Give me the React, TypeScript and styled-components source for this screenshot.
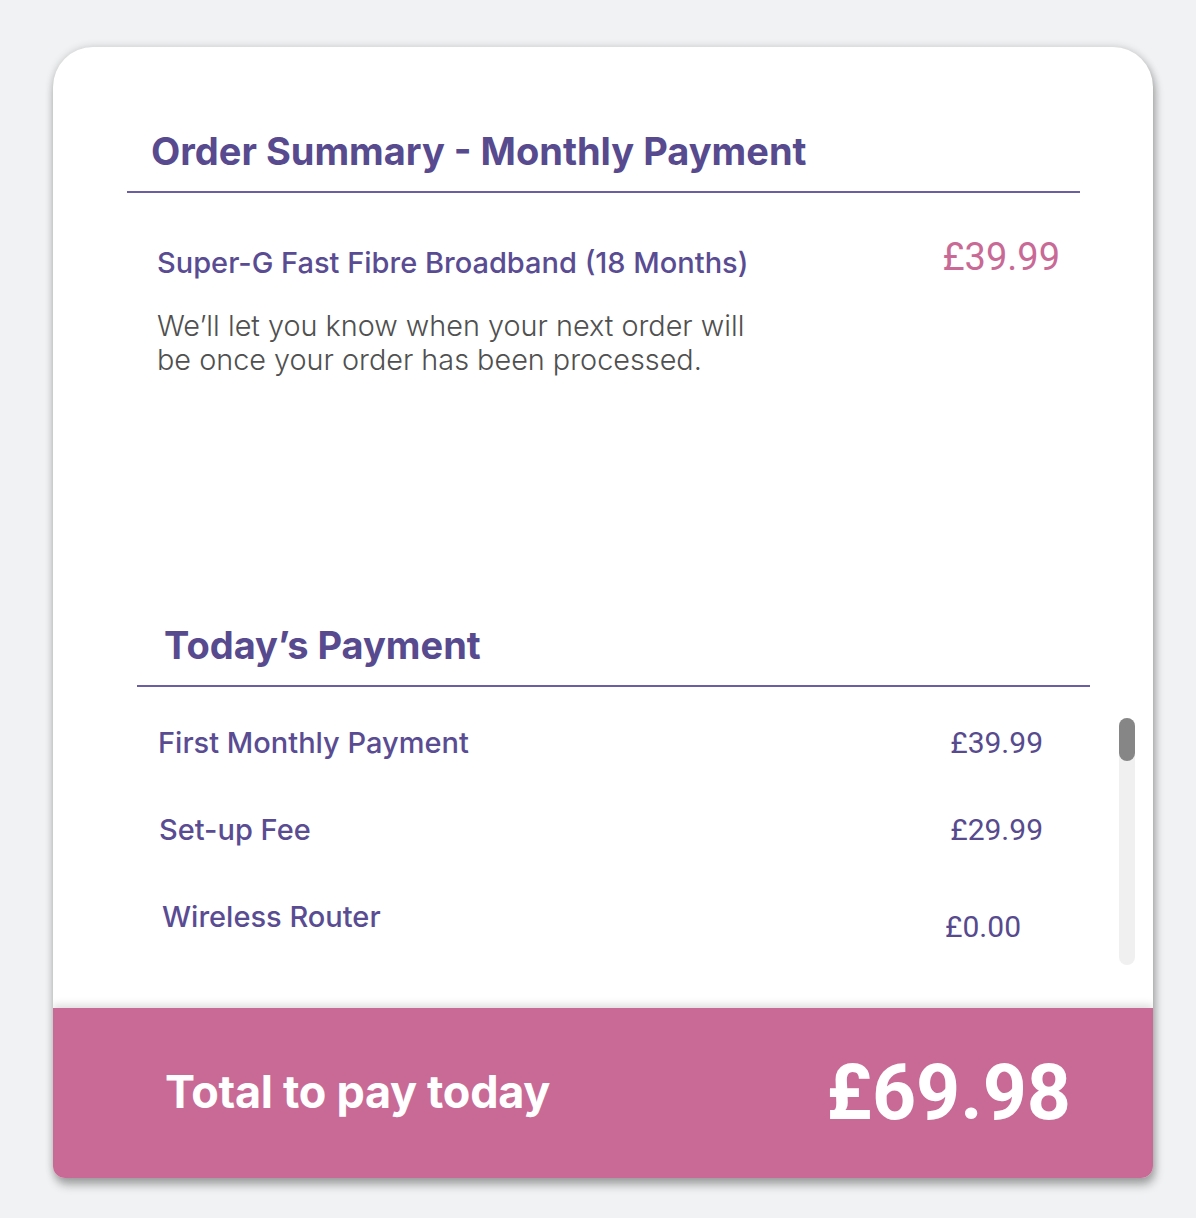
import React from "react";
import styled, { createGlobalStyle } from "styled-components";

const Global = createGlobalStyle`
  html, body { margin: 0; padding: 0; background: #f1f2f3; }
  body { font-family: Inter, "Noto Sans", sans-serif; }
`;

const Page = styled.div`
  width: 1196px;
  height: 1218px;
  box-sizing: border-box;
  padding: 47px 43px 0 53px;
`;

const Card = styled.div`
  width: 1100px;
  height: 1131px;
  background: #fff;
  border-radius: 40px 40px 12px 12px;
  box-shadow: 0 0 8px rgba(0, 0, 0, 0.16), 2px 7px 10px rgba(0, 0, 0, 0.3);
  display: flex;
  flex-direction: column;
  overflow: hidden;
`;

const Body = styled.div`
  flex: 1;
  display: flex;
  flex-direction: column;
`;

const SectionHead = styled.div<{ $top: number; $left: number; $right: number; $indent: number }>`
  margin: ${(p) => p.$top}px ${(p) => p.$right}px 0 ${(p) => p.$left}px;
  padding: 0 0 17px ${(p) => p.$indent}px;
  border-bottom: 2px solid #6b5ea3;
`;

const Heading = styled.h2`
  margin: 0;
  font-size: 38px;
  line-height: 46px;
  font-weight: 700;
  color: #574a8e;
`;

const Product = styled.div`
  display: flex;
  justify-content: space-between;
  align-items: flex-start;
  margin: 53px 93px 0 104px;
`;

const ProductInfo = styled.div`
  display: flex;
  flex-direction: column;
  gap: 29px;
`;

const ProductName = styled.div`
  font-size: 29px;
  line-height: 34px;
  font-weight: 500;
  color: #5a4c93;
`;

const Note = styled.p`
  margin: 0;
  width: 615px;
  font-size: 28.8px;
  line-height: 34px;
  font-weight: 300;
  color: #505050;
`;

const ProductPrice = styled.div`
  font-family: Roboto, "Liberation Sans", sans-serif;
  font-size: 38px;
  line-height: 40px;
  margin-top: -9px;
  color: #c96a96;
`;

const Spacer = styled.div`
  flex: 1;
`;

const Rows = styled.div`
  display: flex;
  margin: 31px 18px 43px 105px;
`;

const RowList = styled.div`
  flex: 1;
  display: flex;
  flex-direction: column;
  gap: 53px;
  padding-top: 8px;
`;

const Row = styled.div`
  display: flex;
  justify-content: space-between;
  align-items: flex-start;
  height: 34px;
`;

const RowLabel = styled.span<{ $indent?: number }>`
  padding-left: ${(p) => p.$indent ?? 0}px;
  font-size: 29px;
  line-height: 34px;
  font-weight: 500;
  color: #5a4c93;
`;

const RowPrice = styled.span<{ $right: number; $down: number }>`
  margin-right: ${(p) => p.$right}px;
  padding-top: ${(p) => p.$down}px;
  font-family: Roboto, "Liberation Sans", sans-serif;
  font-size: 30px;
  line-height: 34px;
  color: #574a8e;
`;

const Track = styled.div`
  width: 16px;
  height: 247px;
  margin-left: 76px;
  border-radius: 8px;
  background: #f0f0f0;
  display: flex;
  flex-direction: column;
`;

const Thumb = styled.div`
  height: 43px;
  border-radius: 8px;
  background: #868686;
`;

const Footer = styled.div`
  height: 170px;
  flex-shrink: 0;
  background: #c96a96;
  box-shadow: 0 -3px 8px rgba(0, 0, 0, 0.14);
  display: flex;
  align-items: center;
  justify-content: space-between;
  padding: 0 82px 0 112px;
`;

const TotalLabel = styled.span`
  font-size: 45px;
  font-weight: 700;
  color: #fff;
  letter-spacing: -0.3px;
  margin-top: -4px;
`;

const TotalValue = styled.span`
  font-family: Roboto, "Liberation Sans", sans-serif;
  font-size: 77px;
  font-weight: 700;
  color: #fff;
`;

const rows = [
  { label: "First Monthly Payment", price: "£39.99", indent: 0, right: 0, down: 0 },
  { label: "Set-up Fee", price: "£29.99", indent: 1, right: 0, down: 0 },
  { label: "Wireless Router", price: "£0.00", indent: 4, right: 22, down: 10 },
];

export default function App() {
  return (
    <>
      <Global />
      <Page>
        <Card>
          <Body>
            <SectionHead $top={81} $left={74} $right={73} $indent={24}>
              <Heading>Order Summary - Monthly Payment</Heading>
            </SectionHead>
            <Product>
              <ProductInfo>
                <ProductName>Super-G Fast Fibre Broadband (18 Months)</ProductName>
                <Note>
                  We’ll let you know when your next order will be once your order has been processed.
                </Note>
              </ProductInfo>
              <ProductPrice>£39.99</ProductPrice>
            </Product>
            <Spacer />
            <SectionHead $top={0} $left={84} $right={63} $indent={27}>
              <Heading>Today’s Payment</Heading>
            </SectionHead>
            <Rows>
              <RowList>
                {rows.map((r) => (
                  <Row key={r.label}>
                    <RowLabel $indent={r.indent}>{r.label}</RowLabel>
                    <RowPrice $right={r.right} $down={r.down}>
                      {r.price}
                    </RowPrice>
                  </Row>
                ))}
              </RowList>
              <Track>
                <Thumb />
              </Track>
            </Rows>
          </Body>
          <Footer>
            <TotalLabel>Total to pay today</TotalLabel>
            <TotalValue>£69.98</TotalValue>
          </Footer>
        </Card>
      </Page>
    </>
  );
}
